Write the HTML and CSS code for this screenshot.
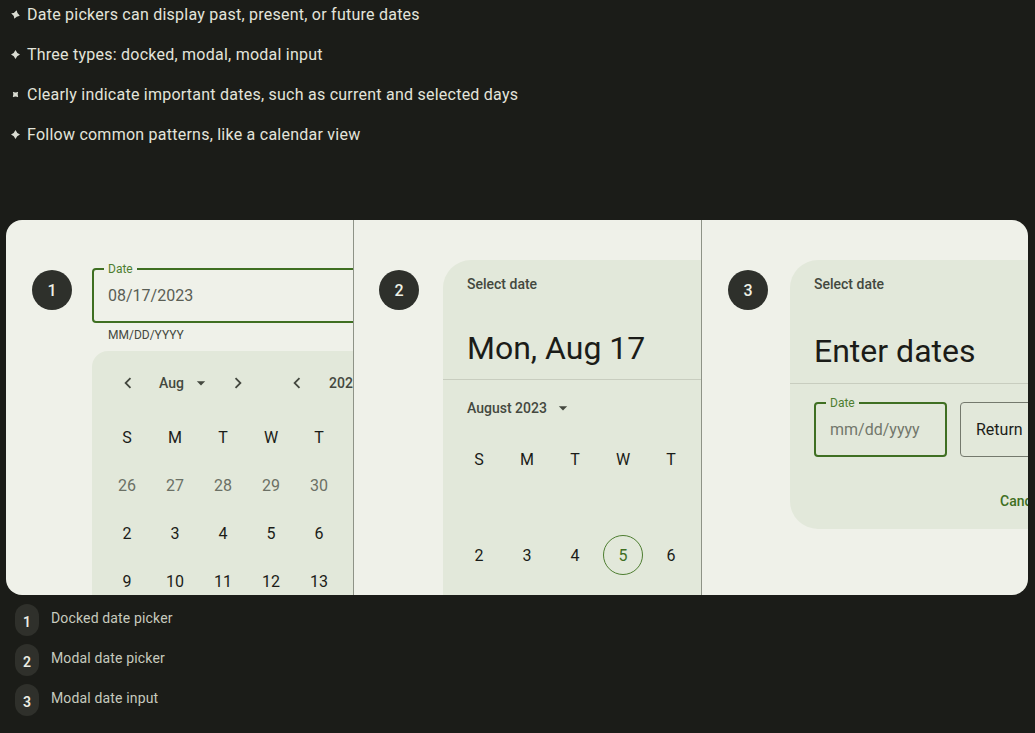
FILE: index.html
```html
<!DOCTYPE html>
<html lang="en">
<head>
<meta charset="utf-8">
<title>Date pickers</title>
<link rel="stylesheet" href="styles.css">
</head>
<body>
<ul class="points">
  <li><svg class="spark r1" viewBox="0 0 10 10"><path d="M5 0 Q6.3 3.7 10 5 Q6.3 6.3 5 10 Q3.7 6.3 0 5 Q3.7 3.7 5 0Z"/></svg><span>Date pickers can display past, present, or future dates</span></li>
  <li><svg class="spark" viewBox="0 0 10 10"><path d="M5 0 Q6.3 3.7 10 5 Q6.3 6.3 5 10 Q3.7 6.3 0 5 Q3.7 3.7 5 0Z"/></svg><span>Three types: docked, modal, modal input</span></li>
  <li><svg class="spark r3" viewBox="0 0 10 10"><path d="M5 0 Q6.3 3.7 10 5 Q6.3 6.3 5 10 Q3.7 6.3 0 5 Q3.7 3.7 5 0Z"/></svg><span>Clearly indicate important dates, such as current and selected days</span></li>
  <li><svg class="spark" viewBox="0 0 10 10"><path d="M5 0 Q6.3 3.7 10 5 Q6.3 6.3 5 10 Q3.7 6.3 0 5 Q3.7 3.7 5 0Z"/></svg><span>Follow common patterns, like a calendar view</span></li>
</ul>

<section class="showcase">
  <div class="panel">
    <div class="badge">1</div>
    <div class="docked">
      <div class="field focused wide">
        <span class="field-label">Date</span>
        <span class="field-value">08/17/2023</span>
      </div>
      <div class="helper">MM/DD/YYYY</div>
      <div class="dock-card">
        <div class="nav">
          <span class="icon-btn"><svg viewBox="0 0 24 24"><path d="M15.4 7.4 14 6l-6 6 6 6 1.4-1.4L10.8 12z"/></svg></span>
          <span class="menu-btn">Aug<svg viewBox="0 0 24 24"><path d="M7 10l5 5 5-5z"/></svg></span>
          <span class="icon-btn"><svg viewBox="0 0 24 24"><path d="M8.6 16.6 10 18l6-6-6-6-1.4 1.4 4.6 4.6z"/></svg></span>
          <span class="nav-gap"></span>
          <span class="icon-btn"><svg viewBox="0 0 24 24"><path d="M15.4 7.4 14 6l-6 6 6 6 1.4-1.4L10.8 12z"/></svg></span>
          <span class="menu-btn">2023</span>
        </div>
        <div class="grid dock-grid">
          <span class="wd">S</span><span class="wd">M</span><span class="wd">T</span><span class="wd">W</span><span class="wd">T</span><span class="wd">F</span><span class="wd">S</span>
          <span class="day out">26</span><span class="day out">27</span><span class="day out">28</span><span class="day out">29</span><span class="day out">30</span><span class="day out">31</span><span class="day">1</span>
          <span class="day">2</span><span class="day">3</span><span class="day">4</span><span class="day">5</span><span class="day">6</span><span class="day">7</span><span class="day">8</span>
          <span class="day">9</span><span class="day">10</span><span class="day">11</span><span class="day">12</span><span class="day">13</span><span class="day">14</span><span class="day">15</span>
        </div>
      </div>
    </div>
  </div>

  <div class="panel">
    <div class="badge">2</div>
    <div class="modal">
      <div class="modal-head">
        <div class="supporting">Select date</div>
        <div class="headline">Mon, Aug 17</div>
      </div>
      <div class="month-row">August 2023<svg viewBox="0 0 24 24"><path d="M7 10l5 5 5-5z"/></svg></div>
      <div class="grid modal-grid">
        <span class="wd">S</span><span class="wd">M</span><span class="wd">T</span><span class="wd">W</span><span class="wd">T</span><span class="wd">F</span><span class="wd">S</span>
        <span class="day"></span><span class="day"></span><span class="day"></span><span class="day"></span><span class="day"></span><span class="day"></span><span class="day">1</span>
        <span class="day">2</span><span class="day">3</span><span class="day">4</span><span class="day today"><i>5</i></span><span class="day">6</span><span class="day">7</span><span class="day">8</span>
      </div>
    </div>
  </div>

  <div class="panel">
    <div class="badge">3</div>
    <div class="modal input-modal">
      <div class="modal-head head3">
        <div class="supporting">Select date</div>
        <div class="headline">Enter dates</div>
      </div>
      <div class="inputs">
        <div class="field focused short">
          <span class="field-label">Date</span>
          <span class="field-value placeholder">mm/dd/yyyy</span>
        </div>
        <div class="field plain short">
          <span class="field-value">Return</span>
        </div>
      </div>
      <div class="actions"><span class="text-btn">Cancel</span><span class="text-btn">OK</span></div>
    </div>
  </div>
</section>

<ol class="legend">
  <li><span class="pill">1</span><span class="legend-text">Docked date picker</span></li>
  <li><span class="pill">2</span><span class="legend-text">Modal date picker</span></li>
  <li><span class="pill">3</span><span class="legend-text">Modal date input</span></li>
</ol>
</body>
</html>
```

FILE: styles.css
```css
* { box-sizing: border-box; }
html, body { margin: 0; padding: 0; }
body {
  background: #1b1c18;
  font-family: Roboto, "Noto Sans", "Liberation Sans", sans-serif;
  width: 1035px;
  height: 733px;
  overflow: hidden;
}

/* Top bullet list */
.points {
  list-style: none;
  margin: 0;
  padding: 2px 0 0 11px;
  display: flex;
  flex-direction: column;
  gap: 16px;
}
.points li {
  display: flex;
  align-items: center;
  gap: 7px;
  height: 24px;
  font-size: 16px;
  letter-spacing: 0.24px;
  color: #e3e4db;
}
.spark { width: 9px; height: 9px; fill: #d9dbd1; flex: none; }
.spark.r1 { transform: rotate(15deg); }
.spark.r3 { transform: rotate(45deg) scale(0.85); }

/* Showcase card */
.showcase {
  margin: 74px 7px 0 6px;
  height: 375px;
  border-radius: 16px;
  background: #eff1e9;
  overflow: hidden;
  display: grid;
  grid-template-columns: 347px 348px 1fr;
}
.panel {
  overflow: hidden;
  display: flex;
  align-items: flex-start;
  gap: 20px;
  padding: 40px 0 0 26px;
}
.panel + .panel { border-left: 1px solid #8e9387; padding-left: 25px; gap: 24px; }
.panel:nth-child(3) { gap: 22px; padding-left: 26px; }
.badge {
  flex: none;
  width: 40px;
  height: 40px;
  margin-top: 10px;
  border-radius: 50%;
  background: #2e302b;
  color: #eef0e6;
  font-size: 16px;
  font-weight: 500;
  display: flex;
  align-items: center;
  justify-content: center;
}

/* Text fields */
.field {
  position: relative;
  flex: none;
  height: 56px;
  border-radius: 4px;
  display: flex;
  align-items: center;
  padding-left: 14px;
  font-size: 16px;
}
.field.focused { border: 2px solid #3f6f22; }
.field.plain { border: 1px solid #74796d; padding-left: 15px; }
.field.wide { width: 330px; height: 55px; padding-bottom: 1px; }
.field.short { width: 133px; }
.field-label {
  position: absolute;
  top: -9px;
  left: 10px;
  padding: 0 4px;
  font-size: 12px;
  line-height: 16px;
  color: #4d7d30;
  background: #eff1e9;
}
.input-modal .field-label { background: #e2e8da; }
.field-value { color: #5a5e55; }
.plain .field-value { color: #1c1d19; }
.field-value.placeholder { color: #72776b; }

/* Docked picker */
.docked { flex: none; width: 360px; padding-top: 8px; }
.helper {
  font-size: 12px;
  line-height: 16px;
  color: #44483f;
  padding-left: 16px;
  margin-top: 4px;
}
.dock-card {
  margin-top: 8px;
  width: 360px;
  height: 300px;
  background: #e2e8da;
  border-radius: 16px 16px 0 0;
  padding-top: 8px;
}
.nav {
  display: flex;
  align-items: center;
  height: 48px;
  padding-left: 12px;
}
.icon-btn {
  flex: none;
  width: 48px;
  height: 48px;
  display: flex;
  align-items: center;
  justify-content: center;
}
.icon-btn svg { width: 22px; height: 22px; fill: #44483f; }
.menu-btn {
  flex: none;
  display: flex;
  align-items: center;
  width: 62px;
  padding-left: 7px;
  font-size: 14px;
  font-weight: 500;
  color: #44483f;
}
.menu-btn svg { width: 20px; height: 20px; fill: #44483f; margin-left: 7px; }
.nav-gap { width: 11px; flex: none; }
.nav .menu-btn:last-child { padding-left: 8px; }

.grid {
  display: grid;
  grid-template-columns: repeat(7, 48px);
  grid-auto-rows: 48px;
}
.dock-grid { padding-left: 11px; margin-top: 6px; }
.wd, .day {
  display: flex;
  align-items: center;
  justify-content: center;
  font-size: 16px;
  color: #1b1c18;
}
.day.out { color: #6b7065; }

/* Modal picker */
.modal {
  flex: none;
  width: 360px;
  height: 400px;
  margin-top: 0;
  background: #e2e8da;
  border-radius: 28px 28px 0 0;
}
.modal-head {
  padding: 14px 24px 11px;
  border-bottom: 1px solid #c8cdbf;
}
.supporting {
  font-size: 14px;
  font-weight: 500;
  line-height: 20px;
  color: #44483f;
}
.headline {
  margin-top: 34px;
  font-size: 32px;
  line-height: 40px;
  color: #1b1c18;
}
.month-row {
  display: flex;
  align-items: center;
  height: 40px;
  margin-top: 8px;
  padding-left: 24px;
  font-size: 14px;
  font-weight: 500;
  color: #44483f;
}
.month-row svg { width: 20px; height: 20px; fill: #44483f; margin-left: 6px; }
.modal-grid { padding-left: 12px; margin-top: 7px; }
.day.today i {
  font-style: normal;
  width: 40px;
  height: 40px;
  border-radius: 50%;
  border: 1px solid #4d7d30;
  color: #3f6f22;
  display: flex;
  align-items: center;
  justify-content: center;
}

/* Modal input */
.input-modal {
  width: 328px;
  height: 269px;
  border-radius: 28px;
}
.head3 { padding-bottom: 12px; }
.head3 .headline { margin-top: 37px; }
.inputs {
  display: flex;
  gap: 13px;
  margin-top: 18px;
  padding-left: 24px;
}
.inputs .field { height: 55px; padding-bottom: 1px; }
.actions {
  display: flex;
  height: 40px;
  margin-top: 24px;
  padding-left: 198px;
}
.text-btn {
  display: flex;
  align-items: center;
  padding: 0 12px;
  font-size: 14px;
  font-weight: 500;
  color: #3f6f22;
}

/* Legend */
.legend {
  list-style: none;
  margin: 9px 0 0 15px;
  padding: 0;
  display: flex;
  flex-direction: column;
  gap: 8px;
}
.legend li {
  display: flex;
  align-items: center;
  gap: 12px;
  height: 32px;
  font-size: 14px;
  letter-spacing: 0.15px;
  color: #c7cabe;
}
.legend-text { padding-bottom: 4px; }
.pill {
  width: 24px;
  height: 32px;
  border-radius: 12px;
  background: #2f302b;
  color: #eceee4;
  font-weight: 600;
  font-size: 14px;
  display: flex;
  align-items: center;
  justify-content: center;
  padding-top: 3px;
}
```
